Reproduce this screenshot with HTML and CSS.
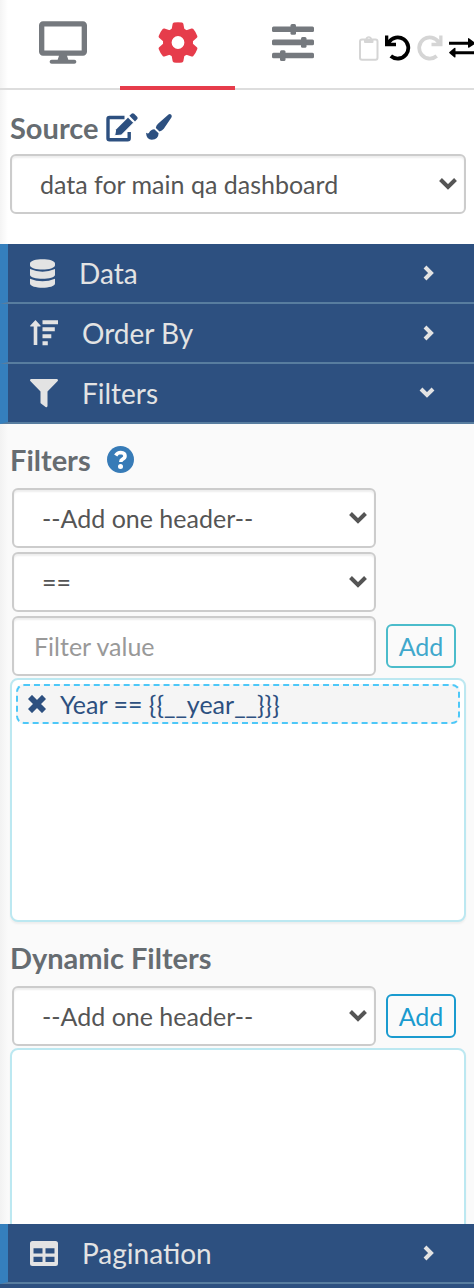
FILE: index.html
```html
<!DOCTYPE html>
<html lang="en">
<head>
    <meta charset="UTF-8">
    <meta name="viewport" content="width=device-width, initial-scale=1.0">
    <title>Dashboard Settings</title>
    <link rel="stylesheet" href="styles.css">
</head>
<body>
    <header class="toolbar">
        <nav class="tabs">
            <button type="button" class="tab" aria-label="Display">
                <svg width="48" height="43" viewBox="0 0 576 512"><path d="M528 0H48C21.500 0 0 21.500 0 48v320c0 26.500 21.500 48 48 48h192l-16 48h-72c-13 0-24 11-24 24s11 24 24 24h272c13 0 24-11 24-24s-11-24-24-24h-72l-16-48h192c26.500 0 48-21.500 48-48V48c0-26.500-21.500-48-48-48zm-16 352H64V64h448v288z"/></svg>
            </button>
            <button type="button" class="tab active" aria-label="Settings">
                <svg width="40" height="41" viewBox="0 0 40 41">
                    <circle cx="20" cy="20.500" r="10.700" fill="none" stroke="currentColor" stroke-width="8.600"/>
                    <g id="teeth">
                        <path id="tooth" d="M13.500 8l1.200-6.200Q15 .7 16 .5q4-.7 8 0 1 .2 1.300 1.300L26.500 8z"/>
                        <use href="#tooth" transform="rotate(60 20 20.500)"/>
                        <use href="#tooth" transform="rotate(120 20 20.500)"/>
                    </g>
                    <use href="#teeth" transform="rotate(180 20 20.500)"/>
                </svg>
            </button>
            <button type="button" class="tab" aria-label="Options">
                <svg width="42" height="37" viewBox="0 0 42 37">
                    <rect y="2.500" width="42" height="5.600" rx="1.500"/><rect x="18.500" width="5.500" height="10.700" rx="1.500"/>
                    <rect y="15.600" width="42" height="5.600" rx="1.500"/><rect x="29" y="13" width="5.500" height="10.700" rx="1.500"/>
                    <rect y="28.700" width="42" height="5.600" rx="1.500"/><rect x="8" y="26.200" width="5.500" height="10.700" rx="1.500"/>
                </svg>
            </button>
        </nav>
        <div class="tools">
            <button type="button" class="tool" aria-label="Paste" disabled>
                <svg width="20" height="26" viewBox="0 0 20 26">
                    <rect x="1" y="4.500" width="17.500" height="20.200" rx="2" fill="none" stroke="currentColor" stroke-width="2"/>
                    <path fill-rule="evenodd" d="M5 4h1.500a3.300 3.300 0 0 1 6.500 0h1.500v3q0 1-1 1H6q-1 0-1-1zM9.800 2.700a1.200 1.200 0 1 0 0 2.400 1.200 1.200 0 0 0 0-2.400z"/>
                </svg>
            </button>
            <button type="button" class="tool" aria-label="Undo">
                <svg width="26" height="26" viewBox="0 0 26 26">
                    <path d="M0 .5h3.300v4.800l2.900 2.500H11v3.400H0z"/>
                    <path d="M3.800 7.200A10.600 10.600 0 1 1 5.800 21" fill="none" stroke="currentColor" stroke-width="3.800"/>
                </svg>
            </button>
            <button type="button" class="tool" aria-label="Redo" disabled>
                <svg width="26" height="26" viewBox="0 0 26 26">
                    <g transform="matrix(-1 0 0 1 25.500 0)">
                        <path d="M0 .5h3.300v4.800l2.900 2.500H11v3.400H0z"/>
                        <path d="M3.800 7.200A10.600 10.600 0 1 1 5.800 21" fill="none" stroke="currentColor" stroke-width="3.800"/>
                    </g>
                </svg>
            </button>
            <button type="button" class="tool" aria-label="Swap">
                <svg width="27" height="20" viewBox="0 0 27 20"><path d="M0 3.700h19V.8Q19-.5 20.300.4l5.600 4.200q.8.700 0 1.400L20.300 9.500Q19 10.200 19 9V6.700H0zM27 13.200H6.500v-2.700q0-1.300-1.300-.4L.5 13.900q-.8.700 0 1.400l4.700 3.900q1.300.9 1.300-.4v-2.600H27z"/></svg>
            </button>
        </div>
    </header>

    <section class="source">
        <div class="heading">
            <label for="source">Source</label>
            <a href="#edit" aria-label="Edit source">
                <svg width="32" height="29" viewBox="0 0 32 29">
                    <path d="M18.500 4.500H3.500Q2 4.500 2 6v19.300q0 1.500 1.500 1.500h18.200q1.500 0 1.500-1.500V19" fill="none" stroke="currentColor" stroke-width="3.400"/>
                    <path stroke="#fff" stroke-width="1" d="M8.700 22.700l1-6.200L22 4.200l5.600 5.600-12.200 12.300z"/>
                    <path d="M23.400 2.800L25.500.7q1.300-1 2.600 0l3 3q1.100 1.300 0 2.600L29 8.400z"/>
                </svg>
            </a>
            <a href="#style" aria-label="Source style">
                <svg width="26" height="26" viewBox="0 0 26 26"><path d="M22.500.4q1.600-.8 2.700.4 1 1.200.2 2.700l-7.600 11.300q-1.800 2.200-4.300 2.600l-3.700-3.400q.2-2.500 2.200-4.300zM8.300 15.300l4.300 4q-.2 6.300-6.800 6.500-5.300-.1-5.800-7.100 2 1.400 2.900.3 2-3.700 5.400-3.700z"/></svg>
            </a>
        </div>
        <select id="source" class="field">
            <option>data for main qa dashboard</option>
        </select>
    </section>

    <main class="accordion">
        <button type="button" class="section-toggle">
            <svg width="25" height="29" viewBox="0 0 25 29"><path d="M0 4.500C0-1.300 25-1.300 25 4.500v1.700c0 5.700-25 5.700-25 0zM0 10q12.500 5.300 25 0v5.800c0 5.300-25 5.300-25 0zM0 19.700q12.500 5.200 25 0v4.800c0 5.600-25 5.600-25 0z"/></svg>
            <span>Data</span>
            <svg class="chevron" width="12" height="16" viewBox="0 0 12 16"><path d="M2 2l6 6-6 6"/></svg>
        </button>
        <button type="button" class="section-toggle">
            <svg width="28" height="26" viewBox="0 0 28 26"><path d="M5.500 0l5 5.500q.4 1-.8 1.100H7.300V25H3.700V6.600H1Q-.2 6.500.3 5.500zM12.500.3H28v4H12.500zM12.500 7.300h12.300v4H12.500zM12.500 14.300h8.800v4h-8.800zM12.500 21.300h5.300v3.900h-5.300z"/></svg>
            <span>Order By</span>
            <svg class="chevron" width="12" height="16" viewBox="0 0 12 16"><path d="M2 2l6 6-6 6"/></svg>
        </button>
        <button type="button" class="section-toggle" aria-expanded="true">
            <svg width="28" height="29" viewBox="0 0 28 29"><path d="M1 0h26q1.500.4.700 1.900L17.500 12.500V27q-.4 1.700-1.900 1L11 24.600q-.5-.4-.5-1.200V12.500L.3 1.900Q-.5.400 1 0z"/></svg>
            <span>Filters</span>
            <svg class="chevron" width="16" height="12" viewBox="0 0 16 12"><path d="M2 2l6 6 6-6"/></svg>
        </button>

        <div class="panel">
            <div class="heading">
                <h2>Filters</h2>
                <a href="#help" class="help" aria-label="Help">
                    <svg width="27" height="27" viewBox="0 0 27 27">
                        <circle cx="13.500" cy="13.500" r="13.500"/>
                        <path d="M8.700 9.500q1.700-3 5-3 4.300.2 4.300 3.500 0 1.900-2.300 3.100-1.900 1-1.900 2.800" fill="none" stroke="#fff" stroke-width="3.600"/>
                        <circle cx="13.500" cy="20.500" r="2.500" fill="#fff"/>
                    </svg>
                </a>
            </div>
            <form class="filter-form">
                <div class="fields">
                    <select class="field" aria-label="Filter header">
                        <option>--Add one header--</option>
                    </select>
                    <select class="field" aria-label="Operator">
                        <option>==</option>
                    </select>
                    <input type="text" class="field" aria-label="Filter value" placeholder="Filter value">
                </div>
                <button type="button" class="add-button muted">Add</button>
            </form>
            <ul class="filter-list">
                <li>
                    <button type="button" class="remove" aria-label="Remove filter">
                        <svg width="18" height="18" viewBox="0 0 18 18"><path d="M4 4l10 10M14 4L4 14" stroke="currentColor" stroke-width="5.800" stroke-linecap="square"/></svg>
                    </button>
                    <span>Year == {{__year__}}}</span>
                </li>
            </ul>

            <div class="heading">
                <h2>Dynamic Filters</h2>
            </div>
            <form class="filter-form">
                <div class="fields">
                    <select class="field" aria-label="Dynamic filter header">
                        <option>--Add one header--</option>
                    </select>
                </div>
                <button type="button" class="add-button">Add</button>
            </form>
            <ul class="filter-list"></ul>
        </div>

        <button type="button" class="section-toggle">
            <svg width="28" height="25" viewBox="0 0 28 25"><path fill-rule="evenodd" d="M2.500 0h23Q28 0 28 2.500v20q0 2.500-2.500 2.500h-23Q0 25 0 22.500v-20Q0 0 2.500 0zM3.500 7.200v5.300h9V7.200zm12 0v5.300h9V7.200zm-12 8.600V21h9v-5.200zm12 0V21h9v-5.200z"/></svg>
            <span>Pagination</span>
            <svg class="chevron" width="12" height="16" viewBox="0 0 12 16"><path d="M2 2l6 6-6 6"/></svg>
        </button>
    </main>
</body>
</html>
```
FILE: styles.css
```css
/* General Styles */
* {
    box-sizing: border-box;
}

body {
    display: flex;
    flex-direction: column;
    min-height: 100vh;
    margin: 0;
    font-family: Lato, "Open Sans", sans-serif;
    font-size: 25px;
    color: #555;
    background: linear-gradient(90deg, #f4f4f4, #fff 8px);
    overflow-x: hidden;
}

button {
    font: inherit;
    color: inherit;
    background: none;
    border: none;
    padding: 0;
    cursor: pointer;
}

svg {
    display: block;
    flex: none;
    fill: currentColor;
}

/* Toolbar */
.toolbar {
    display: flex;
    gap: 9px;
    height: 90px;
    padding-left: 5px;
    box-shadow: inset 0 -2px #ddd;
    overflow: hidden;
}

.tabs {
    display: flex;
    flex: none;
}

.tab {
    display: flex;
    justify-content: center;
    align-items: center;
    width: 115px;
    padding-bottom: 2px;
    color: #75797e;
    border-bottom: 4px solid transparent;
}

.tab.active {
    color: #e63c4b;
    border-bottom-color: #e63c4b;
}

.tools {
    display: flex;
    align-items: center;
    gap: 6px;
    padding-top: 6px;
}

.tool {
    color: #000;
}

.tool:disabled {
    color: #d5d5d5;
}

/* Headings and fields */
.source {
    padding: 20px 8px 30px 10px;
}

.source .heading {
    margin-bottom: 10px;
}

.heading {
    display: flex;
    align-items: center;
    gap: 8px;
    height: 34px;
    font-size: 29px;
    font-weight: bold;
    color: #666c71;
}

.heading h2 {
    margin: 0;
    font-size: 29px;
}

.heading a {
    color: #2d5080;
}

.heading .help {
    margin-left: 8px;
    color: #377bb7;
}

.field {
    display: block;
    width: 100%;
    height: 60px;
    padding: 0 20px;
    font: inherit;
    color: #555;
    background-color: #fff;
    border: 2px solid #ccc;
    border-radius: 6px;
    box-shadow: inset 0 2px 2px rgba(0, 0, 0, 0.07);
}

.field::placeholder {
    color: #999;
}

select.field {
    appearance: none;
    padding: 0 28px;
    background-image: url("data:image/svg+xml,%3Csvg xmlns='http://www.w3.org/2000/svg' width='18' height='12'%3E%3Cpath d='M1.500 1.500L9 9l7.500-7.500' fill='none' stroke='%23555' stroke-width='4'/%3E%3C/svg%3E");
    background-repeat: no-repeat;
    background-position: right 7px center;
}

/* Accordion */
.accordion {
    flex: 1;
    background: #2d5080;
}

.section-toggle {
    display: flex;
    align-items: center;
    gap: 24px;
    width: 100%;
    height: 60px;
    padding: 0 39px 0 22px;
    font-size: 28px;
    text-align: left;
    color: #e3e3e3;
    background: #2d5080;
    border-left: 8px solid #357fbd;
    border-bottom: 2px solid #587d9f;
}

.section-toggle span {
    flex: 1;
}

.chevron {
    fill: none;
    stroke: currentColor;
    stroke-width: 4;
}

/* Filters panel */
.panel {
    max-height: 800px;
    padding: 18px 8px 0 10px;
    background: linear-gradient(90deg, #f2f2f2, #fafafa 8px);
    overflow: hidden;
}

.filter-form {
    display: flex;
    align-items: flex-end;
    gap: 10px;
    margin-top: 12px;
    padding: 0 10px 0 2px;
}

.fields {
    display: flex;
    flex: 1;
    flex-direction: column;
    gap: 4px;
}

.add-button {
    width: 70px;
    height: 44px;
    margin-bottom: 8px;
    color: #1a9bcf;
    border: 2px solid #1a9bcf;
    border-radius: 6px;
}

.add-button.muted {
    color: #40a8cc;
    border-color: #4bbccb;
}

.filter-list {
    height: 244px;
    margin: 2px 0 18px;
    padding: 4px;
    list-style: none;
    background: #fff;
    border: 2px solid #bce8f1;
    border-radius: 8px;
    box-shadow: 0 2px 2px rgba(0, 0, 0, 0.05);
}

.filter-list li {
    display: flex;
    align-items: center;
    gap: 14px;
    height: 40px;
    padding: 0 10px;
    color: #2d5080;
    background: #f5f5f5;
    border: 2px dashed #4dc8f8;
    border-radius: 8px;
}
```
